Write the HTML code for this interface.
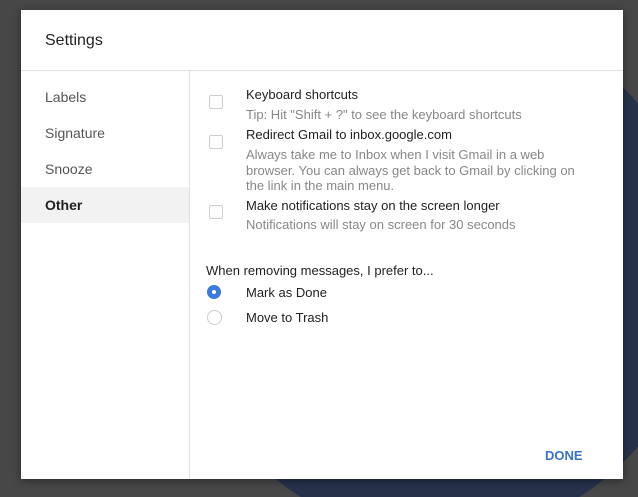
<!DOCTYPE html>
<html><head><style>
html,body{margin:0;padding:0;width:638px;height:497px;overflow:hidden;background:#474747;font-family:"Liberation Sans",sans-serif;position:relative;}
.wrap{position:absolute;left:0;top:0;width:638px;height:497px;overflow:hidden;}
.circ{position:absolute;left:178px;top:13px;width:524px;height:524px;border-radius:50%;background:#26324a;}
.dlg{position:absolute;left:21px;top:10px;width:602px;height:469px;background:#fff;box-shadow:0 2px 8px rgba(0,0,0,.4);}
.hdr{position:absolute;left:24px;top:22px;font-size:16px;color:#222;}
.sep{position:absolute;left:0;right:0;top:60px;height:1px;background:#e2e2e2;}
.side{position:absolute;left:0;top:61px;width:168px;bottom:0;border-right:1px solid #e0e0e0;}
.side div{position:absolute;left:24px;font-size:14px;color:#555;}
.sel{position:absolute;left:0;top:116px;width:168px;height:36px;background:#f2f2f2;}
.t{position:absolute;font-size:13px;color:#222;white-space:nowrap;}
.s{position:absolute;font-size:13px;color:#888;line-height:15.5px;}
.cb{position:absolute;left:188px;width:12px;height:12px;border:1px solid #cfcfcf;border-radius:2px;}
.rd{position:absolute;left:186px;width:14px;height:14px;border-radius:50%;}
</style></head><body>
<div class="wrap"><div class="circ"></div></div>
<div class="dlg">
<div class="hdr">Settings</div>
<div class="sep"></div>
<div class="side">
<div class="sel" style="left:0;top:116px"></div>
<div style="top:18px">Labels</div>
<div style="top:54px">Signature</div>
<div style="top:90px">Snooze</div>
<div style="top:126px;font-weight:bold;color:#222">Other</div>
</div>
<div class="cb" style="top:85px"></div>
<div class="t" style="left:225px;top:77px">Keyboard shortcuts</div>
<div class="s" style="left:225px;top:97px">Tip: Hit "Shift + ?" to see the keyboard shortcuts</div>
<div class="cb" style="top:125px"></div>
<div class="t" style="left:225px;top:117px">Redirect Gmail to inbox.google.com</div>
<div class="s" style="left:225px;top:137px;width:350px">Always take me to Inbox when I visit Gmail in a web browser. You can always get back to Gmail by clicking on the link in the main menu.</div>
<div class="cb" style="top:195px"></div>
<div class="t" style="left:225px;top:188px">Make notifications stay on the screen longer</div>
<div class="s" style="left:225px;top:207px">Notifications will stay on screen for 30 seconds</div>
<div class="t" style="left:185px;top:253px">When removing messages, I prefer to...</div>
<div class="rd" style="top:275px;background:#3a7be0;width:14px;height:14px"><div style="position:absolute;left:5px;top:5px;width:4px;height:4px;border-radius:50%;background:#fff"></div></div>
<div class="t" style="left:225px;top:275px">Mark as Done</div>
<div class="rd" style="top:300px;border:1px solid #ccc;width:13px;height:13px"></div>
<div class="t" style="left:225px;top:300px">Move to Trash</div>
<div style="position:absolute;left:524px;top:438px;font-size:13px;font-weight:bold;color:#3b73c8">DONE</div>
</div>
</body></html>
